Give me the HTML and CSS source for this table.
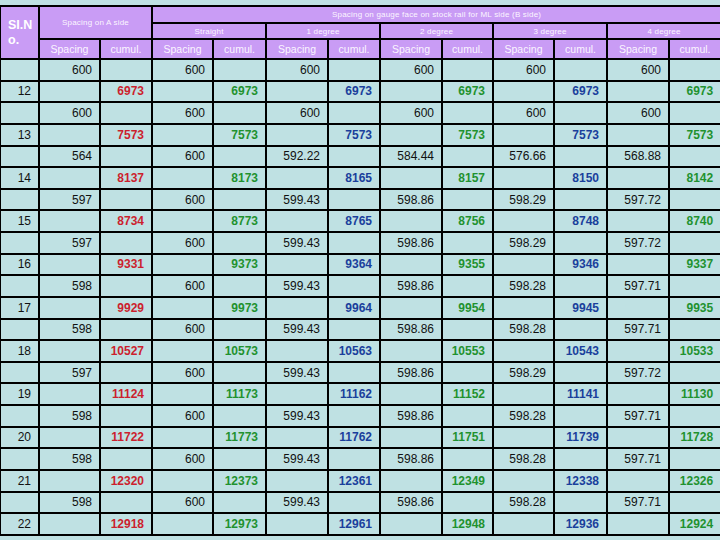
FILE: index.html
```html
<!DOCTYPE html>
<html>
<head>
<meta charset="utf-8">
<link rel="stylesheet" href="styles.css">
</head>
<body>
<table class="grid">
<colgroup>
<col class="c-no"><col class="c-sp"><col class="c-cu">
<col class="c-sp"><col class="c-cu2"><col class="c-sp2"><col class="c-cu">
<col class="c-sp2"><col class="c-cu3"><col class="c-sp"><col class="c-cu2">
<col class="c-sp2"><col class="c-cu">
</colgroup>
<thead>
<tr class="h1">
<th rowspan="3" class="slno">SI.N<br>o.</th>
<th colspan="2" rowspan="2" class="small">Spacing on A side</th>
<th colspan="10" class="small">Spacing on gauge face on stock rail for ML side (B side)</th>
</tr>
<tr class="h2">
<th colspan="2" class="small">Straight</th>
<th colspan="2" class="small">1 degree</th>
<th colspan="2" class="small">2 degree</th>
<th colspan="2" class="small">3 degree</th>
<th colspan="2" class="small">4 degree</th>
</tr>
<tr class="h3">
<th>Spacing</th><th>cumul.</th>
<th>Spacing</th><th>cumul.</th>
<th>Spacing</th><th>cumul.</th>
<th>Spacing</th><th>cumul.</th>
<th>Spacing</th><th>cumul.</th>
<th>Spacing</th><th>cumul.</th>
</tr>
</thead>
<tbody>
<tr><td></td><td>600</td><td></td><td>600</td><td></td><td>600</td><td></td><td>600</td><td></td><td>600</td><td></td><td>600</td><td></td></tr>
<tr><td>12</td><td></td><td class="r">6973</td><td></td><td class="g">6973</td><td></td><td class="b">6973</td><td></td><td class="g">6973</td><td></td><td class="b">6973</td><td></td><td class="g">6973</td></tr>
<tr><td></td><td>600</td><td></td><td>600</td><td></td><td>600</td><td></td><td>600</td><td></td><td>600</td><td></td><td>600</td><td></td></tr>
<tr><td>13</td><td></td><td class="r">7573</td><td></td><td class="g">7573</td><td></td><td class="b">7573</td><td></td><td class="g">7573</td><td></td><td class="b">7573</td><td></td><td class="g">7573</td></tr>
<tr><td></td><td>564</td><td></td><td>600</td><td></td><td>592.22</td><td></td><td>584.44</td><td></td><td>576.66</td><td></td><td>568.88</td><td></td></tr>
<tr><td>14</td><td></td><td class="r">8137</td><td></td><td class="g">8173</td><td></td><td class="b">8165</td><td></td><td class="g">8157</td><td></td><td class="b">8150</td><td></td><td class="g">8142</td></tr>
<tr><td></td><td>597</td><td></td><td>600</td><td></td><td>599.43</td><td></td><td>598.86</td><td></td><td>598.29</td><td></td><td>597.72</td><td></td></tr>
<tr><td>15</td><td></td><td class="r">8734</td><td></td><td class="g">8773</td><td></td><td class="b">8765</td><td></td><td class="g">8756</td><td></td><td class="b">8748</td><td></td><td class="g">8740</td></tr>
<tr><td></td><td>597</td><td></td><td>600</td><td></td><td>599.43</td><td></td><td>598.86</td><td></td><td>598.29</td><td></td><td>597.72</td><td></td></tr>
<tr><td>16</td><td></td><td class="r">9331</td><td></td><td class="g">9373</td><td></td><td class="b">9364</td><td></td><td class="g">9355</td><td></td><td class="b">9346</td><td></td><td class="g">9337</td></tr>
<tr><td></td><td>598</td><td></td><td>600</td><td></td><td>599.43</td><td></td><td>598.86</td><td></td><td>598.28</td><td></td><td>597.71</td><td></td></tr>
<tr><td>17</td><td></td><td class="r">9929</td><td></td><td class="g">9973</td><td></td><td class="b">9964</td><td></td><td class="g">9954</td><td></td><td class="b">9945</td><td></td><td class="g">9935</td></tr>
<tr><td></td><td>598</td><td></td><td>600</td><td></td><td>599.43</td><td></td><td>598.86</td><td></td><td>598.28</td><td></td><td>597.71</td><td></td></tr>
<tr><td>18</td><td></td><td class="r">10527</td><td></td><td class="g">10573</td><td></td><td class="b">10563</td><td></td><td class="g">10553</td><td></td><td class="b">10543</td><td></td><td class="g">10533</td></tr>
<tr><td></td><td>597</td><td></td><td>600</td><td></td><td>599.43</td><td></td><td>598.86</td><td></td><td>598.29</td><td></td><td>597.72</td><td></td></tr>
<tr><td>19</td><td></td><td class="r">11124</td><td></td><td class="g">11173</td><td></td><td class="b">11162</td><td></td><td class="g">11152</td><td></td><td class="b">11141</td><td></td><td class="g">11130</td></tr>
<tr><td></td><td>598</td><td></td><td>600</td><td></td><td>599.43</td><td></td><td>598.86</td><td></td><td>598.28</td><td></td><td>597.71</td><td></td></tr>
<tr><td>20</td><td></td><td class="r">11722</td><td></td><td class="g">11773</td><td></td><td class="b">11762</td><td></td><td class="g">11751</td><td></td><td class="b">11739</td><td></td><td class="g">11728</td></tr>
<tr><td></td><td>598</td><td></td><td>600</td><td></td><td>599.43</td><td></td><td>598.86</td><td></td><td>598.28</td><td></td><td>597.71</td><td></td></tr>
<tr><td>21</td><td></td><td class="r">12320</td><td></td><td class="g">12373</td><td></td><td class="b">12361</td><td></td><td class="g">12349</td><td></td><td class="b">12338</td><td></td><td class="g">12326</td></tr>
<tr><td></td><td>598</td><td></td><td>600</td><td></td><td>599.43</td><td></td><td>598.86</td><td></td><td>598.28</td><td></td><td>597.71</td><td></td></tr>
<tr><td>22</td><td></td><td class="r">12918</td><td></td><td class="g">12973</td><td></td><td class="b">12961</td><td></td><td class="g">12948</td><td></td><td class="b">12936</td><td></td><td class="g">12924</td></tr>
</tbody>
</table>
</body>
</html>
```
FILE: styles.css
```css
html, body {
  margin: 0;
  padding: 0;
  background: #bfe1e3;
  font-family: "Liberation Sans", Arial, sans-serif;
}

.grid {
  border-collapse: collapse;
  table-layout: fixed;
  width: 722px;
  margin-top: 5px;
  margin-left: -1px;
}

.c-no { width: 39px; }
.c-sp { width: 61px; }
.c-sp2 { width: 62px; }
.c-cu { width: 52px; }
.c-cu2 { width: 53px; }
.c-cu3 { width: 51px; }

.grid th,
.grid td {
  border: 2px solid #000;
  padding: 0;
  overflow: hidden;
  white-space: nowrap;
}

.grid th {
  background: #c99cf5;
  color: #fbf6ff;
  font-weight: normal;
  text-align: center;
  font-size: 10.5px;
}

.grid th.small {
  font-size: 8px;
  letter-spacing: 0.2px;
}

.grid th.slno {
  font-size: 12.5px;
  font-weight: bold;
  color: #fff;
  text-align: left;
  padding-left: 7px;
  line-height: 15px;
  vertical-align: middle;
}

.h1 { height: 17px; }
.h2 { height: 16px; }
.h3 { height: 20px; }

.grid tbody tr { height: 21.64px; }

.grid td {
  background: #bfe1e3;
  color: #111;
  font-size: 12px;
  text-align: right;
  padding-right: 7px;
}

.grid td.r,
.grid td.g,
.grid td.b {
  font-weight: bold;
}
.grid td.r { color: #cc1f2e; }
.grid td.g { color: #1f922f; }
.grid td.b { color: #1a3f9c; }
```
